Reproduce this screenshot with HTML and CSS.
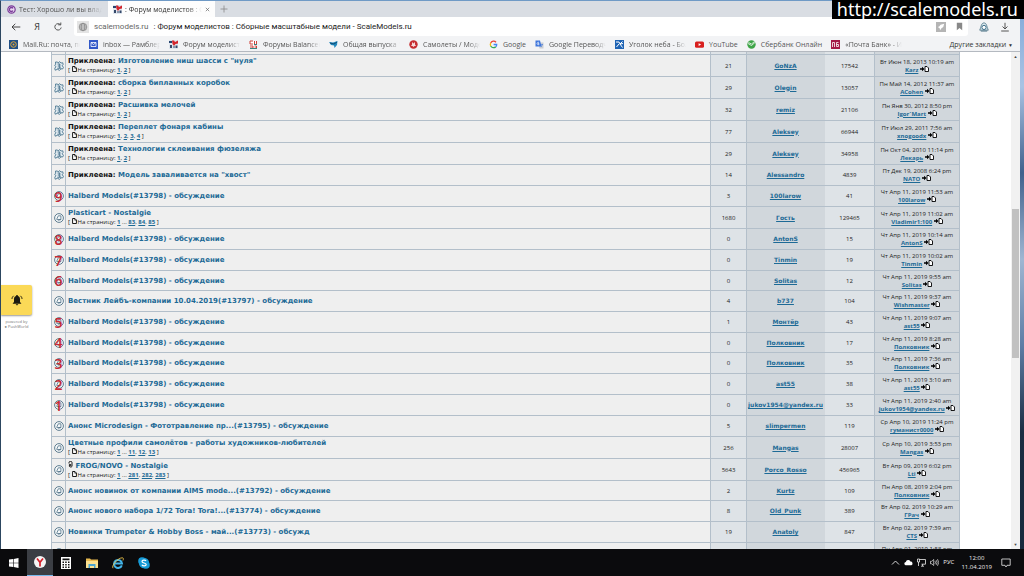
FILE: index.html
```html
<!DOCTYPE html>
<html lang="ru">
<head>
<meta charset="utf-8">
<title>Форум моделистов : Сборные масштабные модели - ScaleModels.ru</title>
<link rel="stylesheet" href="styles.css">
</head>
<body>
<svg class="defs" aria-hidden="true">
  <symbol id="topic" viewBox="0 0 10 10"><circle cx="5" cy="5" r="4.4" fill="#f4f7f9" stroke="#4f7186" stroke-width=".9"/><path d="M2.6 6.4 4.3 2.8h2.6v3.8H2.8M4.8 6.4v1.4M6.9 6.6l-2 .1" fill="none" stroke="#4f7186" stroke-width=".8"/></symbol>
  <symbol id="pinned" viewBox="0 0 10 10"><path d="M1.500 1h2l.8 1L5.500.6 7 2l1.800-.2.3 1.700-.9 1.300L9.500 6.300 8.600 8 7 7.800 5.400 9.500 3.800 8.200 1.200 9.200.8 7.200 2 5.600.6 4.400l1.100-1z" fill="#e2ecf1" stroke="#4a7690" stroke-width=".9"/><path d="M3.600 3h2.200v4M3.500 7.200h3.400M3.800 5h1.800" stroke="#2f5f7d" stroke-width=".9" fill="none"/></symbol>
  <symbol id="page" viewBox="0 0 5 6"><path d="M.6.5h2.300L4.400 2v3.500H.6z" fill="#fff" stroke="#000" stroke-width=".9"/><path d="M2.700.5v1.700h1.700" fill="none" stroke="#000" stroke-width=".6"/></symbol>
  <symbol id="goto" viewBox="0 0 9 6"><path d="M0 2.200h2V.8l2.500 2.200L2 5.200V3.800H0z"/><path d="M5 .5h2L8.500 2v3.500H5z" fill="#fff" stroke="#000" stroke-width=".9"/></symbol>
  <symbol id="sm" viewBox="0 0 9 9"><path d="M0 0h9v9H0z" fill="#dfe6ee"/><path d="M0 1h3v2H0z" fill="#28456f"/><path d="M3 .5h2L6 2l3-1.500v3L6.500 4 5 6 3.500 4z" fill="#d3242c"/><path d="M1 5h2v3H1zM4.500 6h1v2h-1zM6.500 5.500h2V8h-2z" fill="#35486a"/></symbol>
</svg>
<div class="screen">
  <div class="window">
    <header class="tabs">
      <button class="tab"><svg class="ico" viewBox="0 0 9 9"><circle cx="4.500" cy="4.500" r="3.700" fill="#e8d8f0" stroke="#7b3c99" stroke-width="1.200"/><path d="M6 3.300a2 2 0 1 0 0 2.400" fill="none" stroke="#7b3c99" stroke-width="1.300"/></svg><span class="fade">Тест: Хорошо ли вы владеете</span></button>
      <button class="tab active"><svg class="ico"><use href="#sm"/></svg><span class="fade">: Форум моделистов : Сборные</span><svg class="close" viewBox="0 0 5 5"><path d="m.8.8 3.400 3.400M4.200.8.8 4.200" stroke="#666" stroke-width=".7"/></svg></button>
      <button class="newtab" aria-label="Новая вкладка"><svg viewBox="0 0 8 8"><path d="M4 .5v7M.5 4h7" stroke="#888" stroke-width=".8"/></svg></button>
    </header>
    <nav class="toolbar">
      <button aria-label="Назад"><svg viewBox="0 0 10 10"><path d="M9.300 5H1M4.300 1.800 1 5l3.300 3.200" fill="none" stroke="#333" stroke-width=".9"/></svg></button>
      <button class="ya">Я</button>
      <button aria-label="Обновить"><svg viewBox="0 0 10 10"><path d="M7.500 2.800A3.200 3.200 0 1 0 8.200 5.500M5.200 2.800h2.600V.5" fill="none" stroke="#444" stroke-width=".9"/></svg></button>
      <div class="address">
        <span class="globe"><svg viewBox="0 0 10 10"><g fill="none" stroke="#888" stroke-width=".8"><circle cx="5" cy="5" r="3.800"/><ellipse cx="5" cy="5" rx="1.800" ry="3.800"/><path d="M1.200 5h7.600M1.800 3h6.400M1.800 7h6.400"/></g></svg></span>
        <span class="host">scalemodels.ru</span>
        <span class="pagename">: Форум моделистов : Сборные масштабные модели - ScaleModels.ru</span>
        <svg class="rocket" viewBox="0 0 11 11"><path d="M0 0h11v11H0z" fill="#b5b5b5"/><path d="M9 2 5 3 3.500 5 2 5.500 4 7l.5 2 1.500-2 2-1.500z" fill="#fff"/></svg>
        <svg class="flag" viewBox="0 0 7 9"><path d="M.8.8h5.400v7.400L3.500 6 .8 8.200z" fill="#888"/></svg>
      </div>
      <button aria-label="Защита"><svg viewBox="0 0 11 11"><path d="M5.500 1c3 0 3 4 4.700 8H.8C2.500 5 2.500 1 5.500 1z" fill="#d9e7ed" stroke="#4b7386" stroke-width=".9"/><circle cx="5.500" cy="6" r="2.300" fill="#fff" stroke="#2f6480" stroke-width="1"/><path d="M2 10h7" stroke="#4b7386"/></svg></button>
      <button aria-label="Загрузки"><svg viewBox="0 0 10 10"><path d="M5 .8v6M2.500 4.500 5 7l2.500-2.500M1.200 9h7.600" fill="none" stroke="#444" stroke-width=".9"/></svg></button>
    </nav>
    <nav class="bookmarks">
      <a href="#"><svg class="ico" viewBox="0 0 9 9"><path d="M0 0h9v9H0z" fill="#1f4f86"/><circle cx="4.500" cy="4.500" r="2.800" fill="none" stroke="#e0a63a"/><circle cx="4.500" cy="4.500" r="1" fill="#e0a63a"/></svg><span class="fade">Mail.Ru: почта, поиск</span></a>
      <a href="#"><svg class="ico" viewBox="0 0 9 9"><path d="M0 0h9v9H0z" fill="#3158c8"/><path d="M2 2.500h5v4H2zM2 2.500l2.500 2L7 2.500" fill="none" stroke="#fff" stroke-width=".8"/></svg><span class="fade">inbox — Рамблер/почта</span></a>
      <a href="#"><svg class="ico"><use href="#sm"/></svg><span class="fade">Форум моделистов</span></a>
      <a href="#"><svg class="ico" viewBox="0 0 9 9"><path d="M1 1h7v7H1z" fill="#fff"/><path d="M1 1h3M1 1v3h3M5.500 1v3M7.500 1v3M1 6h3v2H1M5.500 6h2v2h-2" fill="none" stroke="#cf4038"/><path d="M1 8.500h7M5 4.500h3" stroke="#3a8580"/></svg><span class="fade">Форумы Balancer'а</span></a>
      <a href="#"><svg class="ico" viewBox="0 0 9 9"><path d="m0 2 4 .5L8.500 1 8 5 5.500 8 5 5.500 2 5z" fill="#2389bd"/><path d="m1 3 4 1 3-2" stroke="#0e4b75" fill="none"/></svg><span class="fade">Общая выпуска 1940</span></a>
      <a href="#"><svg class="ico" viewBox="0 0 9 9"><circle cx="4.500" cy="4.500" r="4.200" fill="#c62d31"/><path d="m3 2 1.500 1.500L6 2v2.500L7 6H5.500l-1 1-1-1H2l1-1.500z" fill="#f5dada"/></svg><span class="fade">Самолеты / Моделизм</span></a>
      <a href="#"><svg class="ico" viewBox="0 0 9 9"><g fill="none" stroke-width="1.300"><path d="M7 2.200A3.200 3.200 0 0 0 1.700 3" stroke="#ea4335"/><path d="M1.700 3a3.200 3.200 0 0 0 0 3" stroke="#fbbc05"/><path d="M1.700 6A3.200 3.200 0 0 0 6.800 6.700" stroke="#34a853"/><path d="M6.800 6.700a3 3 0 0 0 .9-2.200H4.600" stroke="#4285f4"/></g></svg><span>Google</span></a>
      <a href="#"><svg class="ico" viewBox="0 0 9 9"><path d="M3 2.500h5.500v6H4.500z" fill="#c9cdd3"/><path d="M.5.5h4.500l1.500 6h-6z" fill="#4077dc"/><path d="M4 2.500a1.200 1.200 0 1 0 0 2v-.9H3" stroke="#fff" stroke-width=".7" fill="none"/><path d="M5.500 4.500H8M7.500 4.500 6 7" stroke="#4077dc" stroke-width=".6"/></svg><span class="fade">Google Переводчик</span></a>
      <a href="#"><svg class="ico" viewBox="0 0 9 9"><path d="M0 0h9v9H0z" fill="#1e63b4"/><path d="M1 2h3l1 2 2.500-2.500M1.500 7l2.500-3M5 4l2.500 3.500M5 4l3-.5" stroke="#fff" fill="none"/></svg><span class="fade">Уголок неба - Большая</span></a>
      <a href="#"><svg class="ico" viewBox="0 0 9 9"><rect y="1.500" width="9" height="6.200" rx="1.500" fill="#d8201f"/><path d="m3.600 3.200 2.500 1.400-2.500 1.400z" fill="#fff"/></svg><span>YouTube</span></a>
      <a href="#"><svg class="ico" viewBox="0 0 9 9"><circle cx="4.500" cy="4.500" r="4.200" fill="#3da447"/><path d="m1 3.500 3.500 2L8.500 2M1.500 2.500l3 1.500L7.500 1.500" stroke="#fff" stroke-width=".8" fill="none"/></svg><span>Сбербанк Онлайн</span></a>
      <a href="#"><svg class="ico" viewBox="0 0 9 9"><path d="M0 0h9v9H0z" fill="#a41847"/><path d="M1.500 7V2.500h2V7M7.500 2.500h-2v4h2v-2h-2" stroke="#fff" stroke-width=".8" fill="none"/></svg><span class="fade">«Почта Банк» - Интернет</span></a>
      <button class="other">Другие закладки <span class="arrow">▼</span></button>
    </nav>
    <div class="viewport">
      <main class="page">
        <aside class="notify">
          <button class="bell" aria-label="Уведомления"><svg viewBox="0 0 12 12"><path d="M6 1c.7 0 .9.500.9 1C8.600 2.500 9 3.800 9 5.200V8l1.200 1.200v.5H1.800v-.5L3 8V5.200C3 3.800 3.400 2.500 5.100 2c0-.5.2-1 .9-1zM4.800 10.200h2.400c0 1.500-2.400 1.500-2.400 0z" fill="#1c1a10"/><path d="M2.600 1.800Q1 3 .9 5M9.400 1.800Q11 3 11.100 5" fill="none" stroke="#1c1a10" stroke-width=".9"/></svg></button>
          <small>powered by<br>● PushWorld</small>
        </aside>
        <table class="forum">
          <colgroup><col class="c-icon"><col><col class="c-replies"><col class="c-author"><col class="c-views"><col class="c-last"></colgroup>
          <tbody>
          <tr class="multi"><td></td><td><b>Приклеена:</b> <a href="#">Модели</a><p>[ <svg class="pg"><use href="#page"/></svg>На страницу: <a href="#">1</a>, <a href="#">2</a>, <a href="#">3</a> ]</p></td><td></td><td></td><td></td><td></td></tr>
          <tr class="multi"><td><svg class="st"><use href="#pinned"/></svg></td><td><b>Приклеена:</b> <a href="#">Изготовление ниш шасси с "нуля"</a><p>[ <svg class="pg"><use href="#page"/></svg>На страницу: <a href="#">1</a>, <a href="#">2</a> ]</p></td><td>21</td><td><a href="#">GoNzA</a></td><td>17542</td><td>Вт Июн 18, 2013 10:19 am<br><a href="#">Karz</a> <svg class="go"><use href="#goto"/></svg></td></tr>
          <tr class="multi"><td><svg class="st"><use href="#pinned"/></svg></td><td><b>Приклеена:</b> <a href="#">сборка бипланных коробок</a><p>[ <svg class="pg"><use href="#page"/></svg>На страницу: <a href="#">1</a>, <a href="#">2</a> ]</p></td><td>29</td><td><a href="#">Olegin</a></td><td>13057</td><td>Пн Май 14, 2012 11:37 am<br><a href="#">ACohen</a> <svg class="go"><use href="#goto"/></svg></td></tr>
          <tr class="multi"><td><svg class="st"><use href="#pinned"/></svg></td><td><b>Приклеена:</b> <a href="#">Расшивка мелочей</a><p>[ <svg class="pg"><use href="#page"/></svg>На страницу: <a href="#">1</a>, <a href="#">2</a> ]</p></td><td>32</td><td><a href="#">remiz</a></td><td>21106</td><td>Пн Янв 30, 2012 8:50 pm<br><a href="#">Igor`Mart</a> <svg class="go"><use href="#goto"/></svg></td></tr>
          <tr class="multi"><td><svg class="st"><use href="#pinned"/></svg></td><td><b>Приклеена:</b> <a href="#">Переплет фонаря кабины</a><p>[ <svg class="pg"><use href="#page"/></svg>На страницу: <a href="#">1</a>, <a href="#">2</a>, <a href="#">3</a>, <a href="#">4</a> ]</p></td><td>77</td><td><a href="#">Aleksey</a></td><td>66944</td><td>Пт Июл 29, 2011 7:56 am<br><a href="#">xnogoodx</a> <svg class="go"><use href="#goto"/></svg></td></tr>
          <tr class="multi"><td><svg class="st"><use href="#pinned"/></svg></td><td><b>Приклеена:</b> <a href="#">Технологии склеивания фюзеляжа</a><p>[ <svg class="pg"><use href="#page"/></svg>На страницу: <a href="#">1</a>, <a href="#">2</a> ]</p></td><td>29</td><td><a href="#">Aleksey</a></td><td>34958</td><td>Пн Окт 04, 2010 11:14 pm<br><a href="#">Лекарь</a> <svg class="go"><use href="#goto"/></svg></td></tr>
          <tr><td><svg class="st"><use href="#pinned"/></svg></td><td><b>Приклеена:</b> <a href="#">Модель заваливается на "хвост"</a></td><td>14</td><td><a href="#">Alessandro</a></td><td>4839</td><td>Пт Дек 19, 2008 6:24 pm<br><a href="#">NATO</a> <svg class="go"><use href="#goto"/></svg></td></tr>
          <tr><td><svg class="st"><use href="#topic"/></svg><i class="mark">9</i></td><td><a href="#">Halberd Models(#13798) - обсуждение</a></td><td>3</td><td><a href="#">100larow</a></td><td>41</td><td>Чт Апр 11, 2019 11:53 am<br><a href="#">100larow</a> <svg class="go"><use href="#goto"/></svg></td></tr>
          <tr class="multi"><td><svg class="st"><use href="#topic"/></svg></td><td><a href="#">Plasticart - Nostalgie</a><p>[ <svg class="pg"><use href="#page"/></svg>На страницу: <a href="#">1</a> ... <a href="#">83</a>, <a href="#">84</a>, <a href="#">85</a> ]</p></td><td>1680</td><td><a href="#">Гость</a></td><td>129465</td><td>Чт Апр 11, 2019 11:02 am<br><a href="#">Vladimir1:100</a> <svg class="go"><use href="#goto"/></svg></td></tr>
          <tr><td><svg class="st"><use href="#topic"/></svg><i class="mark">8</i></td><td><a href="#">Halberd Models(#13798) - обсуждение</a></td><td>0</td><td><a href="#">AntonS</a></td><td>15</td><td>Чт Апр 11, 2019 10:14 am<br><a href="#">AntonS</a> <svg class="go"><use href="#goto"/></svg></td></tr>
          <tr><td><svg class="st"><use href="#topic"/></svg><i class="mark">7</i></td><td><a href="#">Halberd Models(#13798) - обсуждение</a></td><td>0</td><td><a href="#">Tinmin</a></td><td>19</td><td>Чт Апр 11, 2019 10:02 am<br><a href="#">Tinmin</a> <svg class="go"><use href="#goto"/></svg></td></tr>
          <tr class="tight"><td><svg class="st"><use href="#topic"/></svg><i class="mark">6</i></td><td><a href="#">Halberd Models(#13798) - обсуждение</a></td><td>0</td><td><a href="#">Solitas</a></td><td>12</td><td>Чт Апр 11, 2019 9:55 am<br><a href="#">Solitas</a> <svg class="go"><use href="#goto"/></svg></td></tr>
          <tr><td><svg class="st"><use href="#topic"/></svg></td><td><a href="#">Вестник Лейбъ-компании 10.04.2019(#13797) - обсуждение</a></td><td>4</td><td><a href="#">b737</a></td><td>104</td><td>Чт Апр 11, 2019 9:37 am<br><a href="#">Wishmaster</a> <svg class="go"><use href="#goto"/></svg></td></tr>
          <tr><td><svg class="st"><use href="#topic"/></svg><i class="mark">5</i></td><td><a href="#">Halberd Models(#13798) - обсуждение</a></td><td>1</td><td><a href="#">Монтёр</a></td><td>43</td><td>Чт Апр 11, 2019 9:07 am<br><a href="#">ast55</a> <svg class="go"><use href="#goto"/></svg></td></tr>
          <tr class="tight"><td><svg class="st"><use href="#topic"/></svg><i class="mark">4</i></td><td><a href="#">Halberd Models(#13798) - обсуждение</a></td><td>0</td><td><a href="#">Полковник</a></td><td>17</td><td>Чт Апр 11, 2019 8:28 am<br><a href="#">Полковник</a> <svg class="go"><use href="#goto"/></svg></td></tr>
          <tr><td><svg class="st"><use href="#topic"/></svg><i class="mark">3</i></td><td><a href="#">Halberd Models(#13798) - обсуждение</a></td><td>0</td><td><a href="#">Полковник</a></td><td>35</td><td>Чт Апр 11, 2019 7:36 am<br><a href="#">Полковник</a> <svg class="go"><use href="#goto"/></svg></td></tr>
          <tr><td><svg class="st"><use href="#topic"/></svg><i class="mark">2</i></td><td><a href="#">Halberd Models(#13798) - обсуждение</a></td><td>0</td><td><a href="#">ast55</a></td><td>38</td><td>Чт Апр 11, 2019 3:10 am<br><a href="#">ast55</a> <svg class="go"><use href="#goto"/></svg></td></tr>
          <tr><td><svg class="st"><use href="#topic"/></svg><i class="mark">1</i></td><td><a href="#">Halberd Models(#13798) - обсуждение</a></td><td>0</td><td><a href="#">jukov1954@yandex.ru</a></td><td>33</td><td>Чт Апр 11, 2019 2:40 am<br><a href="#">jukov1954@yandex.ru</a> <svg class="go"><use href="#goto"/></svg></td></tr>
          <tr><td><svg class="st"><use href="#topic"/></svg></td><td><a href="#">Анонс Microdesign - Фототравление пр...(#13795) - обсуждение</a></td><td>5</td><td><a href="#">slimpermen</a></td><td>119</td><td>Ср Апр 10, 2019 11:24 pm<br><a href="#">гуманист0000</a> <svg class="go"><use href="#goto"/></svg></td></tr>
          <tr class="multi"><td><svg class="st"><use href="#topic"/></svg></td><td><a href="#">Цветные профили самолётов - работы художников-любителей</a><p>[ <svg class="pg"><use href="#page"/></svg>На страницу: <a href="#">1</a> ... <a href="#">11</a>, <a href="#">12</a>, <a href="#">13</a> ]</p></td><td>256</td><td><a href="#">Mangas</a></td><td>28007</td><td>Ср Апр 10, 2019 3:53 pm<br><a href="#">Mangas</a> <svg class="go"><use href="#goto"/></svg></td></tr>
          <tr class="multi"><td><svg class="st"><use href="#topic"/></svg></td><td><svg class="clip" viewBox="0 0 5 7"><path d="M1 2.500V1.600a1.500 1.200 0 0 1 3 0v3.800a1.500 1.200 0 0 1-2.600 0V3.500h1.300v1.600" fill="none" stroke="#000" stroke-width=".9"/></svg> <a href="#">FROG/NOVO - Nostalgie</a><p>[ <svg class="pg"><use href="#page"/></svg>На страницу: <a href="#">1</a> ... <a href="#">281</a>, <a href="#">282</a>, <a href="#">283</a> ]</p></td><td>5643</td><td><a href="#">Porco_Rosso</a></td><td>456965</td><td>Вт Апр 09, 2019 6:02 pm<br><a href="#">Lti</a> <svg class="go"><use href="#goto"/></svg></td></tr>
          <tr class="tight"><td><svg class="st"><use href="#topic"/></svg></td><td><a href="#">Анонс новинок от компании AIMS mode...(#13792) - обсуждение</a></td><td>2</td><td><a href="#">Kurtz</a></td><td>109</td><td>Пн Апр 08, 2019 2:04 pm<br><a href="#">Полковник</a> <svg class="go"><use href="#goto"/></svg></td></tr>
          <tr><td><svg class="st"><use href="#topic"/></svg></td><td><a href="#">Анонс нового набора 1/72 Tora! Tora!...(#13774) - обсуждение</a></td><td>8</td><td><a href="#">Old_Punk</a></td><td>389</td><td>Вт Апр 02, 2019 10:29 am<br><a href="#">ГРач</a> <svg class="go"><use href="#goto"/></svg></td></tr>
          <tr><td><svg class="st"><use href="#topic"/></svg></td><td><a href="#">Новинки Trumpeter &amp; Hobby Boss - май...(#13773) - обсужд</a></td><td>19</td><td><a href="#">Anatoly</a></td><td>847</td><td>Вт Апр 02, 2019 7:39 am<br><a href="#">CTS</a> <svg class="go"><use href="#goto"/></svg></td></tr>
          <tr><td><svg class="st"><use href="#topic"/></svg></td><td></td><td></td><td></td><td></td><td>Пн Апр 01, 2019 1:58 pm<br><a href="#">CTS</a></td></tr>
          </tbody>
        </table>
      </main>
      <div class="scrollbar"><span>▲</span><div class="track"><div class="thumb"></div></div><span>▼</span></div>
    </div>
  </div>
  <footer class="taskbar">
    <button aria-label="Пуск"><svg viewBox="0 0 12 12"><path d="M1 2.600 5.200 2v3.700H1zM5.800 1.900 10.500 1v4.700H5.800zM1 6.300h4.200V10L1 9.400zM5.800 6.300h4.700V11l-4.700-.9z" fill="#fff"/></svg></button>
    <button class="running" aria-label="Яндекс.Браузер"><svg viewBox="0 0 12 12"><circle cx="6" cy="6" r="6" fill="#f5f5f5"/><path d="M3 2.500 6 6.300l3-3.800M6 6v4.500" stroke="#d5202b" stroke-width="1.700" fill="none"/></svg></button>
    <button aria-label="Калькулятор"><svg viewBox="0 0 12 12"><path d="M1 0h10v12H1z" fill="#fff"/><path d="M2.500 1.500h7v1.700h-7zM2.500 4.500h1.500V6H2.500zM5.200 4.500h1.500V6H5.200zM8 4.500h1.500V6H8zM2.500 7h1.500v1.500H2.500zM5.200 7h1.500v1.500H5.200zM8 7h1.500v1.500H8zM2.500 9.500h1.500V11H2.500zM5.200 9.500h1.500V11H5.200zM8 9.500h1.500V11H8z" fill="#111"/></svg></button>
    <button aria-label="Проводник"><svg viewBox="0 0 12 12"><path d="M0 1.500h4l1 1h7v8.500H0z" fill="#e7b950"/><path d="M0 4h12v7H0z" fill="#fbe08f"/><path d="M2.500 11V7h7v4H8V9H4v2z" fill="#4ba3cf"/></svg></button>
    <button aria-label="Internet Explorer"><svg viewBox="0 0 12 12"><path d="M9.800 8.300A4 4 0 1 1 10 6.500H3" fill="none" stroke="#43b4e8" stroke-width="2"/><path d="M1 11.200C-1 9 6 .5 10.500.8c1.200.2 1 1.600.4 2.700" fill="none" stroke="#f0c64d" stroke-width=".9"/></svg></button>
    <button aria-label="Skype"><svg viewBox="0 0 12 12"><circle cx="4" cy="4" r="3.800" fill="#169bd7"/><circle cx="8" cy="8" r="3.800" fill="#169bd7"/><circle cx="6" cy="6" r="5.200" fill="#169bd7"/><path d="M8 4C7.500 2.700 4 2.700 4 4.500S8.200 5.700 8.200 7.500 4.500 9.300 3.900 7.700" fill="none" stroke="#fff" stroke-width="1.200"/></svg></button>
    <div class="tray">
      <svg viewBox="0 0 9 9"><path d="M1 6.500 4.500 3 8 6.500" fill="none" stroke="#eee" stroke-width=".9"/></svg>
      <svg viewBox="0 0 9 9"><path d="M1.500 7.200a1.700 1.700 0 0 1 .3-3.300A2.500 2.500 0 0 1 6.400 3.400a2 2 0 0 1 1 3.800z" fill="#fff"/></svg>
      <svg viewBox="0 0 9 9"><path d="M2.500 1.500h6v4.700h-4M5.500 6.200V8M4 8.200h3M.5 1h2v3h-2zM1.500 4v4" fill="none" stroke="#eee" stroke-width=".8"/></svg>
      <svg viewBox="0 0 9 9"><path d="M.5 3.300h1.300L3.700 1.500v6L1.800 5.800H.5zM5 3.200q1 1.300 0 2.600M6.200 2.200q1.800 2.300 0 4.600M7.500 1.200q2.400 3.300 0 6.600" fill="none" stroke="#eee" stroke-width=".7"/></svg>
      <span>РУС</span>
      <time>12:00<br>11.04.2019</time>
      <svg class="note" viewBox="0 0 10 10"><path d="M.8 1h8.400v6.300H6L5 9 4 7.300H.8z" fill="none" stroke="#eee" stroke-width=".8"/></svg>
    </div>
  </footer>
  <div class="stamp">http://scalemodels.ru</div>
</div>
</body>
</html>
```
FILE: styles.css
```css
* { box-sizing: border-box; }
body { margin: 0; font-family: "Open Sans", "Noto Sans", sans-serif; font-size: 7px; color: #333; }
button { border: 0; padding: 0; margin: 0; background: none; font: inherit; color: inherit; }
svg { display: block; flex: none; }
a { color: #1d6a96; }
.defs { position: absolute; width: 0; height: 0; }
.screen { position: relative; height: 100vh; display: flex; flex-direction: column; overflow: hidden; background: linear-gradient(#7fa8d8, #a9c3e4 15%, #40618c 30%, #9fb6d2 45%, #5d7da5 60%, #1a2d42 75%, #17293b); }
.window { flex: 1; min-height: 0; display: flex; flex-direction: column; margin-right: 4px; border-left: 1px solid #2c4660; border-top: 1px solid #6f9ac6; background: #fff; }
.ico { width: 9px; height: 9px; }
.fade { overflow: hidden; white-space: nowrap; -webkit-mask-image: linear-gradient(90deg, #000 80%, transparent); mask-image: linear-gradient(90deg, #000 80%, transparent); }

.tabs { height: 16px; display: flex; flex: none; background: #d9dde3; }
.tab { width: 107px; display: flex; align-items: center; gap: 3px; padding: 0 6px; color: #555; }
.tab .fade { flex: 1; text-align: left; }
.tab.active { background: #fdfdfd; padding: 0 5px; color: #333; }
.close { width: 5px; height: 5px; }
.newtab { padding: 0 5px; }
.newtab svg { width: 8px; height: 8px; }

.toolbar { height: 19px; flex: none; display: flex; align-items: center; gap: 11px; padding: 0 10px; background: #f2f3f5; }
.toolbar svg { width: 10px; height: 10px; }
.toolbar .ya { font-size: 9px; width: 10px; }
.address { flex: 1; height: 19px; display: flex; align-items: center; gap: 5px; padding: 0 5px 0 3px; background: #fff; border-radius: 3px; white-space: nowrap; font-family: Roboto, sans-serif; font-size: 8px; }
.address .globe { padding: 1px; background: #e4e4e4; }
.address .pagename { flex: 1; color: #222; }
.address .host { color: #666; }
.address .rocket { margin-right: 5px; }
.address .flag { width: 7px; height: 9px; }

.bookmarks { height: 16px; flex: none; display: flex; align-items: center; gap: 9px; padding: 2px 7px 0 8px; background: #f2f3f5; border-bottom: 1px solid #b4b9c0; }
.bookmarks a { display: flex; align-items: center; gap: 5px; color: #555; text-decoration: none; white-space: nowrap; }
.bookmarks a .fade { max-width: 57px; }
.other { margin-left: auto; white-space: nowrap; }
.arrow { font-size: 5px; }

.viewport { flex: 1; min-height: 0; display: flex; overflow: hidden; }
.page { flex: 1; position: relative; overflow: hidden; padding: 0 51px 0 50px; }
.notify { position: absolute; left: 0; top: 233px; width: 31px; }
.bell { width: 31px; height: 30px; display: flex; align-items: center; justify-content: center; background: #fbd957; box-shadow: 0 1px 2px #999; border-radius: 0 2px 2px 0; }
.bell svg { width: 12px; height: 12px; }
.notify small { display: block; margin-top: 4px; text-align: center; font-size: 4px; line-height: 5px; color: #777; }

.forum { width: 100%; margin-top: -20px; table-layout: fixed; border-collapse: collapse; font-size: 6px; line-height: 8px; color: #222; }
.c-icon { width: 14px; }
.c-replies { width: 36px; }
.c-author { width: 78px; }
.c-views { width: 50px; }
.c-last { width: 85px; }
.forum tr { height: 21px; }
.forum tr.multi { height: 22px; }
.forum tr.tight { height: 20px; }
.forum td { padding: 0; border: 1px solid #b3bfca; text-align: center; vertical-align: middle; background: #dee3e7; white-space: nowrap; }
.forum td:nth-child(-n+2) { background: #efefef; }
.forum td:nth-child(1) { position: relative; }
.forum td:nth-child(2) { padding-left: 2px; text-align: left; overflow: hidden; font: bold 7px/8px "DejaVu Sans", sans-serif; }
.forum td:nth-child(2) > a { text-decoration: none; }
.forum td:nth-child(4), .forum td:nth-child(6) { background: #d1d7dc; }
.forum td:nth-child(4) { border-left-color: #d1d7dc; border-right-color: #d1d7dc; font: bold 6px/8px "DejaVu Sans", sans-serif; }
.forum td:nth-child(6) a { font-weight: bold; }
.forum b { color: #111; }
.forum p { margin: 1px 0 0; font: 6px/8px "Open Sans", sans-serif; }
.forum p a { font-weight: bold; }
.forum svg { display: inline-block; }
.forum .st { display: block; width: 10px; height: 10px; margin: 0 auto; }
.forum .pg { width: 5px; height: 6px; margin-right: 1px; }
.forum .go { width: 9px; height: 6px; }
.forum .clip { width: 5px; height: 7px; }
.mark { position: absolute; inset: 0; display: flex; align-items: center; justify-content: center; font: 600 14px "Open Sans", sans-serif; color: #c92a35; }

.scrollbar { width: 9px; flex: none; display: flex; flex-direction: column; align-items: center; background: #f1f1f1; font-size: 4px; line-height: 9px; color: #444; }
.track { flex: 1; width: 100%; padding: 0 1px; }
.track::before { content: ""; display: block; height: 31%; }
.thumb { height: 31%; background: #c1c1c1; }

.taskbar { height: 27px; flex: none; display: flex; padding-left: 1px; background: #0b0b0d; color: #eee; }
.taskbar button { width: 26px; display: flex; align-items: center; justify-content: center; }
.taskbar button svg { width: 12px; height: 12px; }
.taskbar .running { background: #3b3e44; border-bottom: 1px solid #76b9ed; }
.tray { margin-left: auto; display: flex; align-items: center; gap: 4px; padding-right: 13px; font-size: 6px; line-height: 9px; }
.tray svg { width: 9px; height: 9px; }
.tray time { margin: 0 5px 0 3px; text-align: center; }
.tray .note { width: 10px; height: 10px; }

.stamp { position: absolute; top: 0; right: 0; padding: 0 6px 0 5px; background: #000; color: #fff; font: 18px/19px "Noto Sans", sans-serif; }
```
